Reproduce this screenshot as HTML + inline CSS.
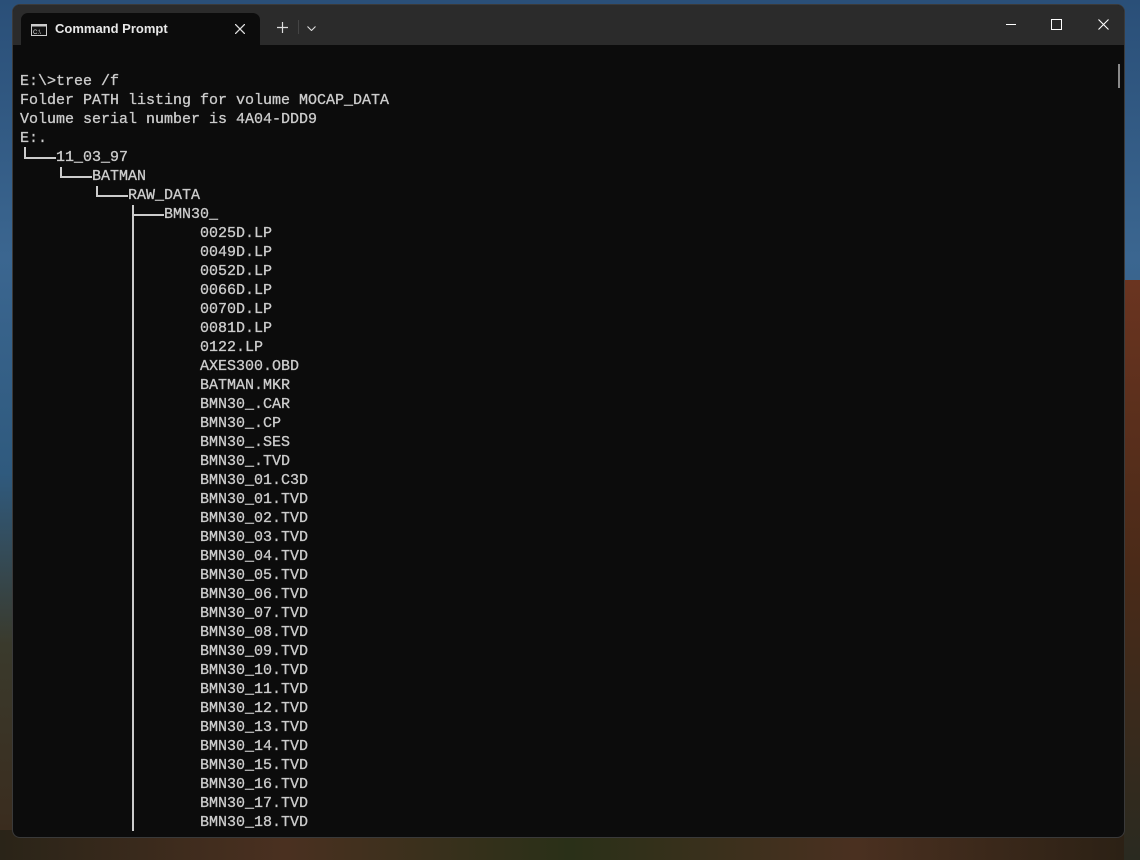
<!DOCTYPE html>
<html><head><meta charset="utf-8"><style>
html,body{margin:0;padding:0}
body{width:1140px;height:860px;overflow:hidden;position:relative;
background:linear-gradient(180deg,#2a4f78 0%,#3b6690 30%,#2f5a7e 55%,#3a3a2c 75%,#3a2a1c 100%);}
.bl{position:absolute;left:0;bottom:0;width:1140px;height:30px;background:linear-gradient(90deg,#2a2418,#4a3020,#2a3018,#4a3020,#2a2014)}
.br{position:absolute;right:0;top:280px;width:16px;height:580px;background:linear-gradient(180deg,#6a3420,#4a2a18,#2a2a20)}
.win{position:absolute;left:12px;top:4px;width:1113px;height:834px;background:#0c0c0c;border-radius:8px;overflow:hidden;border:1px solid #3a3a3a;box-sizing:border-box}
.tb{position:absolute;left:0;top:0;width:100%;height:40px;background:#2b2b2b}
.tab{position:absolute;left:8px;top:8px;width:239px;height:32px;background:#0c0c0c;border-radius:7px 7px 0 0}
.tab .t{position:absolute;left:34px;top:8px;font:13px "Liberation Sans",sans-serif;font-weight:bold;color:#e8e8e8}
pre{position:absolute;left:7px;top:67px;margin:0;font:15px/19px "Liberation Mono",monospace;color:#cccccc;-webkit-text-stroke:0.3px #cccccc}
.l{position:absolute;background:#cccccc}
</style></head><body>
<div class="bl"></div><div class="br"></div>
<div class="win">
<div class="tb"></div>
<div class="tab">
<svg style="position:absolute;left:10px;top:11px" width="16" height="12" viewBox="0 0 16 12"><rect x="0.5" y="0.5" width="15" height="11" fill="#111" stroke="#ccc"/><rect x="0.5" y="0.5" width="15" height="2" fill="#ccc"/><text x="2" y="10" font-size="6" fill="#ddd" font-family="Liberation Sans">C:\_</text></svg>
<div class="t">Command Prompt</div>
<svg style="position:absolute;left:214px;top:11px" width="10" height="10"><path d="M0 0L10 10M10 0L0 10" stroke="#ddd" stroke-width="1.3"/></svg>
</div>
<svg style="position:absolute;left:264px;top:17px" width="11" height="11"><path d="M5.5 0V11M0 5.5H11" stroke="#ddd" stroke-width="1.2"/></svg>
<div style="position:absolute;left:285px;top:15px;width:1px;height:14px;background:#444"></div>
<svg style="position:absolute;left:294px;top:21px" width="9" height="5"><path d="M0.5 0.5L4.5 4.5L8.5 0.5" stroke="#ddd" fill="none" stroke-width="1.1"/></svg>
<div style="position:absolute;left:993px;top:19px;width:10px;height:1px;background:#fff"></div>
<div style="position:absolute;left:1038px;top:14px;width:9px;height:9px;border:1px solid #fff"></div>
<svg style="position:absolute;left:1085px;top:14px" width="11" height="11"><path d="M0.5 0.5L10.5 10.5M10.5 0.5L0.5 10.5" stroke="#fff" stroke-width="1.1"/></svg>
<div style="position:absolute;left:1105px;top:59px;width:2px;height:24px;background:#8a8a8a"></div>
<pre>E:\>tree /f
Folder PATH listing for volume MOCAP_DATA
Volume serial number is 4A04-DDD9
E:.
    11_03_97
        BATMAN
            RAW_DATA
                BMN30_
                    0025D.LP
                    0049D.LP
                    0052D.LP
                    0066D.LP
                    0070D.LP
                    0081D.LP
                    0122.LP
                    AXES300.OBD
                    BATMAN.MKR
                    BMN30_.CAR
                    BMN30_.CP
                    BMN30_.SES
                    BMN30_.TVD
                    BMN30_01.C3D
                    BMN30_01.TVD
                    BMN30_02.TVD
                    BMN30_03.TVD
                    BMN30_04.TVD
                    BMN30_05.TVD
                    BMN30_06.TVD
                    BMN30_07.TVD
                    BMN30_08.TVD
                    BMN30_09.TVD
                    BMN30_10.TVD
                    BMN30_11.TVD
                    BMN30_12.TVD
                    BMN30_13.TVD
                    BMN30_14.TVD
                    BMN30_15.TVD
                    BMN30_16.TVD
                    BMN30_17.TVD
                    BMN30_18.TVD</pre>
<div class="l" style="left:11px;top:142px;width:2px;height:12px"></div>
<div class="l" style="left:11px;top:152px;width:32px;height:2px"></div>
<div class="l" style="left:47px;top:162px;width:2px;height:11px"></div>
<div class="l" style="left:47px;top:171px;width:32px;height:2px"></div>
<div class="l" style="left:83px;top:181px;width:2px;height:11px"></div>
<div class="l" style="left:83px;top:190px;width:32px;height:2px"></div>
<div class="l" style="left:119px;top:200px;width:2px;height:626px"></div>
<div class="l" style="left:119px;top:209px;width:32px;height:2px"></div>
</div>
</body></html>
